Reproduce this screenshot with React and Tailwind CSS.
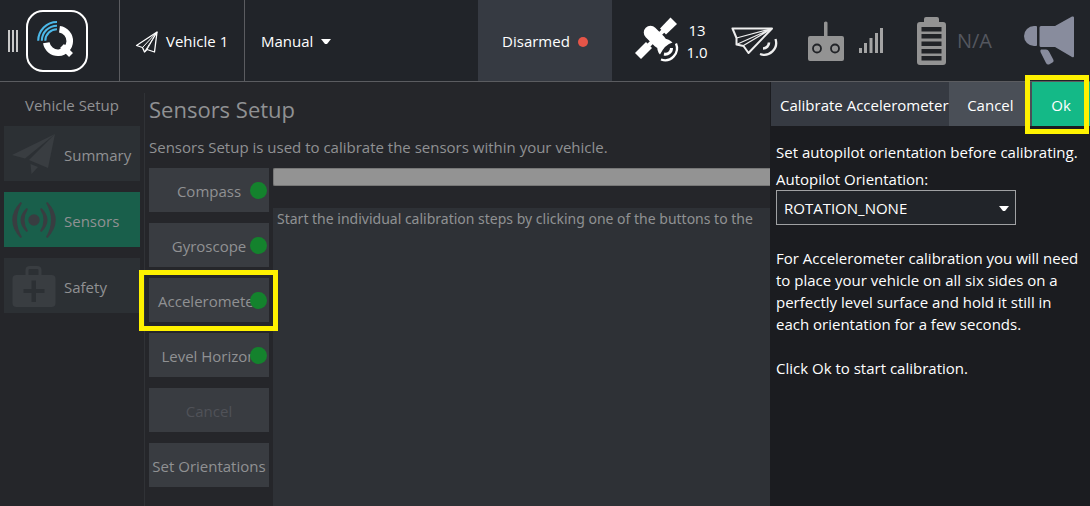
import React from "react";

function QLogo() {
  return (
    <svg viewBox="0 0 62 62" className="size-[62px]" fill="none" aria-hidden="true">
      <rect x="1" y="1" width="60" height="60" rx="16" stroke="#fff" strokeWidth="2" />
      <path d="M33.500 19.200 A11.800 11.800 0 1 1 20.300 32.800" stroke="#fff" strokeWidth="6.600" />
      <path d="M36 36 L45 45" stroke="#fff" strokeWidth="5.500" />
      <g stroke="#4cb8e8" strokeWidth="2.100">
        <path d="M12.200 30.700 A18.800 18.800 0 0 1 31 12" />
        <path d="M15.800 30.700 A15.200 15.200 0 0 1 31 15.700" />
        <path d="M19.300 30.700 A11.700 11.700 0 0 1 31 19.300" />
      </g>
    </svg>
  );
}

function PlaneOutline() {
  return (
    <svg viewBox="0 0 24 24" className="size-6" fill="none" stroke="#fff" strokeWidth="1.3" strokeLinejoin="round" aria-hidden="true">
      <path d="M22 2 L1.5 15.500 L7.5 17.5 L9.5 22 L12 19.5 L19.5 22 Z" />
      <path d="M22 2 L7.5 17.5 M22 2 L12 19.5 M22 2 L9.5 22" strokeWidth="1" />
    </svg>
  );
}

function Satellite() {
  return (
    <svg viewBox="0 0 46 47" className="h-[47px] w-[46px] shrink-0" aria-hidden="true">
      <g fill="#fff">
        <path d="M25 11.500 L35.500 0.500 L42 7 L31 17.500 Z" />
        <path d="M0 36 L11 25 L17 31 L6 42 Z" />
        <path d="M37.500 25.500 Q30 27.500 25 37.500 Q21.500 34 22.500 28 L29 21.500 Q34 22 37.500 25.500 Z" />
      </g>
      <path d="M15.500 15.500 L24.500 24.500" stroke="#fff" strokeWidth="13.500" strokeLinecap="round" />
      <path d="M24 18 L29 13 M12 30 L18 24" stroke="#fff" strokeWidth="4" />
      <g fill="none" stroke="#fff">
        <path d="M36.500 31 A6 6 0 0 1 29 37" strokeWidth="3" />
        <path d="M41 26.500 A12 12 0 0 1 26 42.500" strokeWidth="2.300" />
      </g>
    </svg>
  );
}

function PlaneSignal() {
  return (
    <svg viewBox="0 0 48 34" className="h-[34px] w-12 shrink-0" fill="none" stroke="#eee" strokeLinejoin="round" aria-hidden="true">
      <path d="M1.500 4.500 L41 4.500 L17.500 29 L12.500 22 L5.500 20.500 L5.500 14 Z" strokeWidth="2" />
      <path d="M41 4.500 L5.500 14 M41 4.500 L5.500 20.500 M41 4.500 L12.500 21.500" strokeWidth="1.200" />
      <path d="M38 18.500 A6 6 0 0 1 32 24.500" strokeWidth="2.600" />
      <path d="M44.500 15 A12 12 0 0 1 29 30" strokeWidth="2.300" />
    </svg>
  );
}

function Controller() {
  return (
    <svg viewBox="0 0 36 40" className="h-10 w-9 shrink-0" aria-hidden="true">
      <path d="M16 1.500 Q18 -0.500 19.500 1.500 V15 H34 Q36 15 36 17 V38 Q36 40 34 40 H2 Q0 40 0 38 V17 Q0 15 2 15 H16 Z" fill="#939393" />
      <g fill="none" stroke="#212327" strokeWidth="1.800">
        <circle cx="9" cy="27.500" r="4" />
        <circle cx="27" cy="27.500" r="4" />
      </g>
    </svg>
  );
}

function SignalBars() {
  return (
    <svg viewBox="0 0 24 25" className="h-[25px] w-6 shrink-0" fill="#a4a4a4" aria-hidden="true">
      <rect x="0" y="20" width="3" height="5" />
      <rect x="5" y="15" width="3" height="10" />
      <rect x="10.500" y="10" width="3" height="15" />
      <rect x="16" y="5" width="3" height="20" />
      <rect x="21" y="0" width="3" height="25" />
    </svg>
  );
}

function Battery() {
  return (
    <svg viewBox="0 0 29 48" className="h-12 w-[29px] shrink-0" aria-hidden="true">
      <path d="M9 0 H20 Q22 0 22 2 V5 H26 Q29 5 29 8 V45 Q29 48 26 48 H3 Q0 48 0 45 V8 Q0 5 3 5 H7 V2 Q7 0 9 0 Z" fill="#939393" />
      <g fill="#212327">
        <rect x="4.500" y="10" width="20" height="4.500" />
        <rect x="4.500" y="17" width="20" height="4.500" />
        <rect x="4.500" y="24.500" width="20" height="4.500" />
        <rect x="4.500" y="32" width="20" height="4.500" />
        <rect x="4.500" y="39" width="20" height="4.500" />
      </g>
    </svg>
  );
}

function Megaphone() {
  return (
    <svg viewBox="0 0 50 49" className="h-[49px] w-[50px] shrink-0" fill="#888c9d" aria-hidden="true">
      <path d="M10 10 H12 Q13 10 13 11 V29 Q13 30 12 30 H10 A10 10 0 0 1 10 10 Z" />
      <path d="M17 10 H31 L48 0.500 Q50 0 50 1.500 V40 Q50 42 48 41 L31 31 H17 Q15.500 31 15.500 29.500 V11.500 Q15.500 10 17 10 Z" />
      <path d="M17 33.500 H22 Q24 33.500 25 35.500 L29.500 44 Q30 45.500 28.500 46.500 L25 48.500 Q23 49 22 47 L16.500 36 Q16 34 17 33.500 Z" />
    </svg>
  );
}

function PlaneSolid() {
  return (
    <svg viewBox="0 0 44 42" className="h-[42px] w-11" fill="#393d41" aria-hidden="true">
      <path d="M43 1 L0 22 L13 25.500 Z" />
      <path d="M43 1 L17 27 L36 35 Z" />
      <path d="M18.500 31 L26 34 L19.500 41 Z" />
    </svg>
  );
}

function SensorWaves() {
  return (
    <svg viewBox="0 0 44 36" className="h-9 w-11" fill="#393d41" aria-hidden="true">
      <circle cx="22" cy="18" r="5.700" />
      <path d="M8.500 0 Q-8 18 8.500 36 L10 35 Q0 18 10 1 Z M35.500 0 Q52 18 35.500 36 L34 35 Q44 18 34 1 Z" />
      <path d="M14.500 6 Q2.500 18 14.500 30 L16 29 Q9 18 16 7 Z M29.500 6 Q41.500 18 29.500 30 L28 29 Q35 18 28 7 Z" />
    </svg>
  );
}

function MedKit() {
  return (
    <svg viewBox="0 0 44 42" className="h-[42px] w-11" aria-hidden="true">
      <path d="M15 10 V5 Q15 2.500 18 2.500 H25 Q28 2.500 28 5 V10" fill="none" stroke="#393d41" strokeWidth="3" />
      <rect x="0.500" y="10" width="43" height="32" rx="4" fill="#393d41" />
      <path d="M19.500 15.500 H24 V24 H32.500 V28 H24 V37 H19.500 V28 H11.500 V24 H19.500 Z" fill="#2c3034" />
    </svg>
  );
}

function Caret({ className }) {
  return (
    <svg viewBox="0 0 10 6" className={className} fill="#fff" aria-hidden="true">
      <path d="M0 0 H10 L6 5 H4 Z" />
    </svg>
  );
}

const highlight = "pointer-events-none absolute border-5 border-[#fff200]";

const pages = [
  { label: "Summary", Icon: PlaneSolid },
  { label: "Sensors", Icon: SensorWaves, active: true },
  { label: "Safety", Icon: MedKit },
];

const steps = [
  { label: "Compass", done: true },
  { label: "Gyroscope", done: true },
  { label: "Accelerometer", done: true },
  { label: "Level Horizon", done: true },
  { label: "Cancel", disabled: true },
  { label: "Set Orientations" },
];

function Toolbar() {
  return (
    <header className="flex h-[82px] shrink-0 border-b border-[#5b5c60] bg-[#212429] text-white">
      <button type="button" aria-label="Main menu" className="flex w-[119px] shrink-0 items-center gap-2 pl-2">
        <span className="flex h-[22px] gap-0.5">
          <span className="w-0.5 bg-[#c8c8c8]" />
          <span className="w-0.5 bg-[#c8c8c8]" />
          <span className="w-0.5 bg-[#c8c8c8]" />
        </span>
        <QLogo />
      </button>
      <button type="button" className="flex w-[126px] shrink-0 items-center gap-[7px] border-x border-[#5b5c60] pt-0.5 pl-[15px]">
        <PlaneOutline />
        Vehicle 1
      </button>
      <button type="button" className="flex items-center gap-2 pt-0.5 pl-4">
        Manual
        <Caret className="h-1.5 w-2.5" />
      </button>
      <div className="ml-auto flex w-[134px] shrink-0 items-center justify-center gap-2 bg-[#363a42] pt-0.5">
        Disarmed
        <span className="size-2.5 rounded-full bg-[#e65548]" />
      </div>
      <div className="flex shrink-0 items-center pr-4 pl-[23px]">
        <Satellite />
        <div className="ml-0.5 w-7 text-center leading-[22px]">
          <div>13</div>
          <div>1.0</div>
        </div>
        <div className="ml-5">
          <PlaneSignal />
        </div>
        <div className="ml-[29px] flex items-center gap-[15px]">
          <Controller />
          <SignalBars />
        </div>
        <div className="ml-[34px] flex items-center gap-[11px]">
          <Battery />
          <span className="text-xl text-[#54575f]">N/A</span>
        </div>
        <div className="ml-8">
          <Megaphone />
        </div>
      </div>
    </header>
  );
}

function SetupNav() {
  return (
    <nav className="w-36 shrink-0 px-1 pt-3">
      <h2 className="text-center leading-[22px]">Vehicle Setup</h2>
      <ul className="mt-2.5 flex flex-col gap-[11px]">
        {pages.map(({ label, Icon, active }) => (
          <li key={label}>
            <button
              type="button"
              className={`flex h-[55px] w-full items-center gap-2 pl-2 ${active ? "bg-[#195f4b]" : "bg-[#2c3034]"}`}
            >
              <span className="shrink-0">
                <Icon />
              </span>
              <span className="pt-[3px]">{label}</span>
            </button>
          </li>
        ))}
      </ul>
    </nav>
  );
}

function SensorsPage() {
  return (
    <main className="mt-[11px] flex min-w-0 flex-1 flex-col overflow-hidden border-l border-[#303236] pl-1">
      <h1 className="text-[22px] leading-8">Sensors Setup</h1>
      <p className="mt-[11px] leading-[22px] whitespace-nowrap">
        Sensors Setup is used to calibrate the sensors within your vehicle.
      </p>
      <div className="mt-2.5 flex flex-1 gap-1">
        <div className="flex w-[120px] shrink-0 flex-col gap-[11px]">
          {steps.map((step) => (
            <div key={step.label} className="relative">
              <button
                type="button"
                disabled={step.disabled}
                className={`block h-11 w-full bg-[#393c41] pt-0.5 whitespace-nowrap ${step.disabled ? "text-[#505258]" : ""}`}
              >
                {step.label}
              </button>
              {step.done && (
                <span className="absolute top-3.5 right-0.5 size-[17px] rounded-full bg-[#14822d]" />
              )}
            </div>
          ))}
        </div>
        <div className="flex min-w-0 flex-1 flex-col">
          <div
            role="progressbar"
            aria-label="Calibration progress"
            aria-valuenow={0}
            aria-valuemin={0}
            aria-valuemax={100}
            className="h-[18px] rounded-l-xs border border-r-0 border-[#777] bg-[#939393]"
          />
          <div className="mt-[22px] flex-1 overflow-hidden bg-[#2e3136] pl-1 font-['Noto_Sans',sans-serif] text-sm leading-[22px] whitespace-nowrap">
            Start the individual calibration steps by clicking one of the buttons to the
          </div>
        </div>
      </div>
    </main>
  );
}

function CalibrationDrawer() {
  return (
    <aside className="w-80 shrink-0 bg-[#1b1c20] pl-px text-white">
      <div className="relative flex h-11 bg-[#363a42] pl-[9px]">
        <h2 className="flex-1 leading-[46px] whitespace-nowrap">Calibrate Accelerometer</h2>
        <button type="button" className="w-[84px] bg-[#4a4f57] pt-0.5">
          Cancel
        </button>
        <button type="button" className="w-[58px] bg-[#14b987] pt-0.5">
          Ok
        </button>
        <span className={`${highlight} -top-[7px] right-px -bottom-2 w-16`} />
      </div>
      <div className="px-[5px] pt-[15px] leading-[22px]">
        <p className="whitespace-nowrap">Set autopilot orientation before calibrating.</p>
        <label htmlFor="orientation" className="mt-[5px] block">
          Autopilot Orientation:
        </label>
        <div className="relative w-60">
          <select
            id="orientation"
            className="block h-[35px] w-full appearance-none border border-[#a0a1a3] bg-[#212429] pl-[7px] text-white"
          >
            <option>ROTATION_NONE</option>
          </select>
          <Caret className="pointer-events-none absolute top-4 right-[7px] h-1.5 w-2.5" />
        </div>
        <p className="mt-[22px]">
          For Accelerometer calibration you will need to place your vehicle on all six sides on a perfectly level
          surface and hold it still in each orientation for a few seconds.
        </p>
        <p className="mt-[22px]">Click Ok to start calibration.</p>
      </div>
    </aside>
  );
}

export default function App() {
  return (
    <div className="flex min-h-screen flex-col bg-[#25262a] font-['Open_Sans','Noto_Sans',sans-serif] text-[15px] text-[#909193]">
      <Toolbar />
      <div className="relative flex flex-1">
        <SetupNav />
        <SensorsPage />
        <CalibrationDrawer />
        <span className={`${highlight} top-[188px] left-[139px] h-[61px] w-[139px]`} />
      </div>
    </div>
  );
}
